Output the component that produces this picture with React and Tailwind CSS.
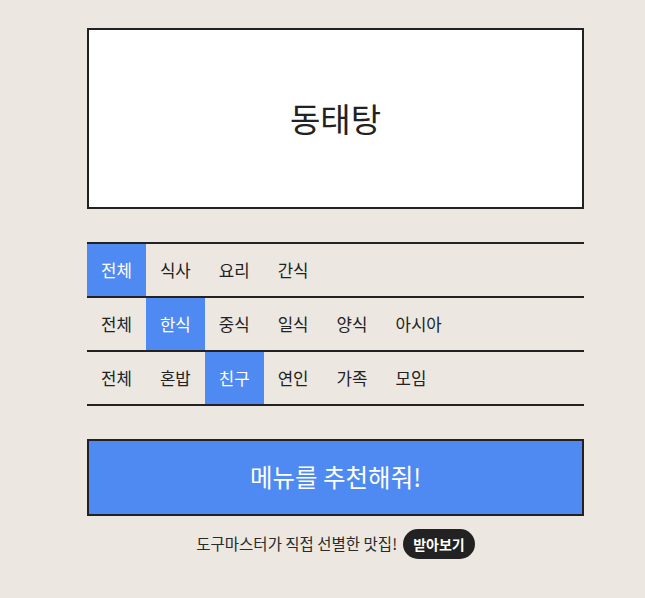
import React, { useState } from 'react';

// 카테고리 필터 데이터
const FILTERS = [
    ['전체', '식사', '요리', '간식'],
    ['전체', '한식', '중식', '일식', '양식', '아시아'],
    ['전체', '혼밥', '친구', '연인', '가족', '모임'],
];

const FilterRow = ({ items, selected, onSelect }) => (
    <div className="flex border-b-2 border-[#222222]">
        {items.map((item, i) => (
            <button
                key={item}
                onClick={() => onSelect(i)}
                className={`h-[52px] px-3.5 text-[16.8px] leading-6 ${i === selected ? 'bg-[#4f8af2] text-white' : 'text-[#222222]'}`}
            >
                {item}
            </button>
        ))}
    </div>
);

const App = () => {
    const [selected, setSelected] = useState([0, 1, 2]);

    const select = (row, idx) => {
        const next = [...selected];
        next[row] = idx;
        setSelected(next);
    };

    return (
        <div
            className="min-h-[598px] bg-[#ece8e1] pt-[28px] pl-[87px]"
            style={{ fontFamily: '"Noto Sans CJK KR", "Noto Sans", sans-serif' }}
        >
            <div className="w-[497px]">
                {/* 결과 박스 */}
                <div className="h-[181px] border-2 border-[#222222] bg-white flex items-center justify-center">
                    <span className="text-[33px] text-[#222222]">동태탕</span>
                </div>

                {/* 필터 */}
                <div className="mt-[33px] border-t-2 border-[#222222]">
                    {FILTERS.map((items, row) => (
                        <FilterRow
                            key={row}
                            items={items}
                            selected={selected[row]}
                            onSelect={(i) => select(row, i)}
                        />
                    ))}
                </div>

                {/* 추천 버튼 */}
                <button className="mt-[33px] w-full h-[77px] border-2 border-[#222222] bg-[#4f8af2] text-white text-[24.5px]">
                    메뉴를 추천해줘!
                </button>

                <div className="mt-[13px] flex items-center justify-center gap-[6px] text-[15.5px] text-[#2a2a2a]">
                    <span>도구마스터가 직접 선별한 맛집!</span>
                    <span className="h-[30px] px-[10px] rounded-full bg-[#222222] text-white text-[14px] font-bold flex items-center">
                        받아보기
                    </span>
                </div>
            </div>
        </div>
    );
};

export default App;
